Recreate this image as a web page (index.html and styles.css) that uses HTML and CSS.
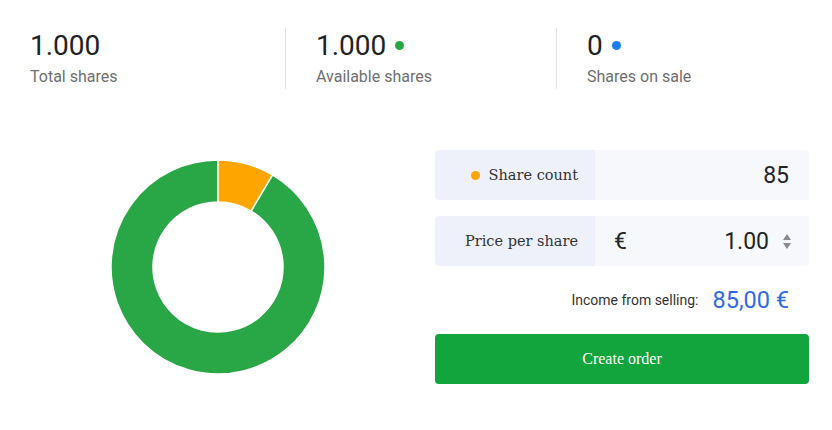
FILE: index.html
```html
<!DOCTYPE html>
<html>
<head>
<meta charset="utf-8">
<link rel="stylesheet" href="styles.css">
</head>
<body>
<div class="stats">
  <div class="stat stat-first">
    <div class="stat-num">1.000</div>
    <div class="stat-label">Total shares</div>
  </div>
  <div class="stat">
    <div class="stat-num">1.000<span class="dot dot-green"></span></div>
    <div class="stat-label">Available shares</div>
  </div>
  <div class="stat stat-last">
    <div class="stat-num">0<span class="dot dot-blue"></span></div>
    <div class="stat-label">Shares on sale</div>
  </div>
</div>
<div class="main">
  <div class="chart">
    <svg class="donut" width="214" height="214" viewBox="-107 -107 214 214">
      <path d="M 0 -107 A 107 107 0 1 0 54.45 -92.11 L 33.08 -55.96 A 65 65 0 1 1 0 -65 Z" fill="#29a746" stroke="#fff" stroke-width="1.5"/>
      <path d="M 0 -107 A 107 107 0 0 1 54.45 -92.11 L 33.08 -55.96 A 65 65 0 0 0 0 -65 Z" fill="#ffa500" stroke="#fff" stroke-width="1.5"/>
    </svg>
  </div>
  <div class="form">
    <div class="row">
      <div class="row-label"><span class="dot dot-orange"></span>Share count</div>
      <div class="row-input"><span class="val">85</span></div>
    </div>
    <div class="row">
      <div class="row-label">Price per share</div>
      <div class="row-input row-price">
        <span class="cur">€</span>
        <span class="spacer"></span>
        <span class="val">1.00</span>
        <span class="spin"><span class="up"></span><span class="down"></span></span>
      </div>
    </div>
    <div class="income">
      <span class="income-label">Income from selling:</span>
      <span class="income-val">85,00 €</span>
    </div>
    <button class="btn">Create order</button>
  </div>
</div>
</body>
</html>
```
FILE: styles.css
```css
html, body {
  margin: 0;
  padding: 0;
  background: #fff;
}
body {
  font-family: Roboto, "Liberation Sans", sans-serif;
  color: #212529;
  width: 832px;
  height: 430px;
  overflow: hidden;
}
.stats {
  display: flex;
  padding-top: 28px;
}
.stat {
  width: 240px;
  padding: 0 0 0 30px;
  border-right: 1px solid #e3e3e3;
}
.stat-first {
  width: 255px;
}
.stat-last {
  border-right: none;
}
.stat-num {
  font-size: 28px;
  line-height: 36px;
  color: #222;
  display: flex;
  align-items: center;
}
.stat-label {
  font-size: 16px;
  line-height: 24px;
  color: #6f6f6f;
  margin-top: 1px;
}
.dot {
  display: inline-block;
  width: 9px;
  height: 9px;
  border-radius: 50%;
}
.stat-num .dot {
  margin-left: 9px;
  margin-top: -1px;
}
.dot-green { background: #28a745; }
.dot-blue { background: #1a7df2; }
.dot-orange {
  background: #ffa500;
  margin-right: 9px;
}
.main {
  display: flex;
  margin-top: 61px;
}
.chart {
  width: 435px;
  display: flex;
  justify-content: center;
  align-items: center;
}
.donut {
  display: block;
}
.form {
  width: 374px;
  display: flex;
  flex-direction: column;
}
.row {
  display: flex;
  height: 50px;
  border-radius: 4px;
  overflow: hidden;
  margin-bottom: 16px;
}
.row-label {
  width: 160px;
  box-sizing: border-box;
  background: #eef1f9;
  display: flex;
  align-items: center;
  justify-content: flex-end;
  padding-right: 17px;
  font-family: "DejaVu Serif", "Liberation Serif", serif;
  font-size: 14.5px;
  color: #333;
}
.row-input {
  flex: 1;
  background: #f7f8fc;
  display: flex;
  align-items: center;
  justify-content: flex-end;
  padding: 0 20px 0 19px;
  font-size: 23px;
  color: #212529;
}
.row-price {
  padding-right: 18px;
}
.spacer {
  flex: 1;
}
.spin {
  display: flex;
  flex-direction: column;
  align-items: center;
  margin-left: 14px;
  gap: 3px;
}
.up {
  width: 0;
  height: 0;
  border-left: 4.5px solid transparent;
  border-right: 4.5px solid transparent;
  border-bottom: 6px solid #8a8a8a;
}
.down {
  width: 0;
  height: 0;
  border-left: 4.5px solid transparent;
  border-right: 4.5px solid transparent;
  border-top: 6px solid #8a8a8a;
}
.income {
  height: 36px;
  margin: 0 0 16px;
  display: flex;
  align-items: center;
  justify-content: flex-end;
  padding-right: 20px;
}
.income-label {
  font-size: 14px;
  color: #333;
  margin-right: 14px;
}
.income-val {
  font-size: 23.5px;
  color: #2f6be3;
}
.btn {
  height: 50px;
  border: none;
  border-radius: 4px;
  background: #12a43d;
  color: #fff;
  font-family: "Liberation Serif", "DejaVu Serif", serif;
  font-size: 16px;
  padding: 0;
  margin: 0;
}
```
